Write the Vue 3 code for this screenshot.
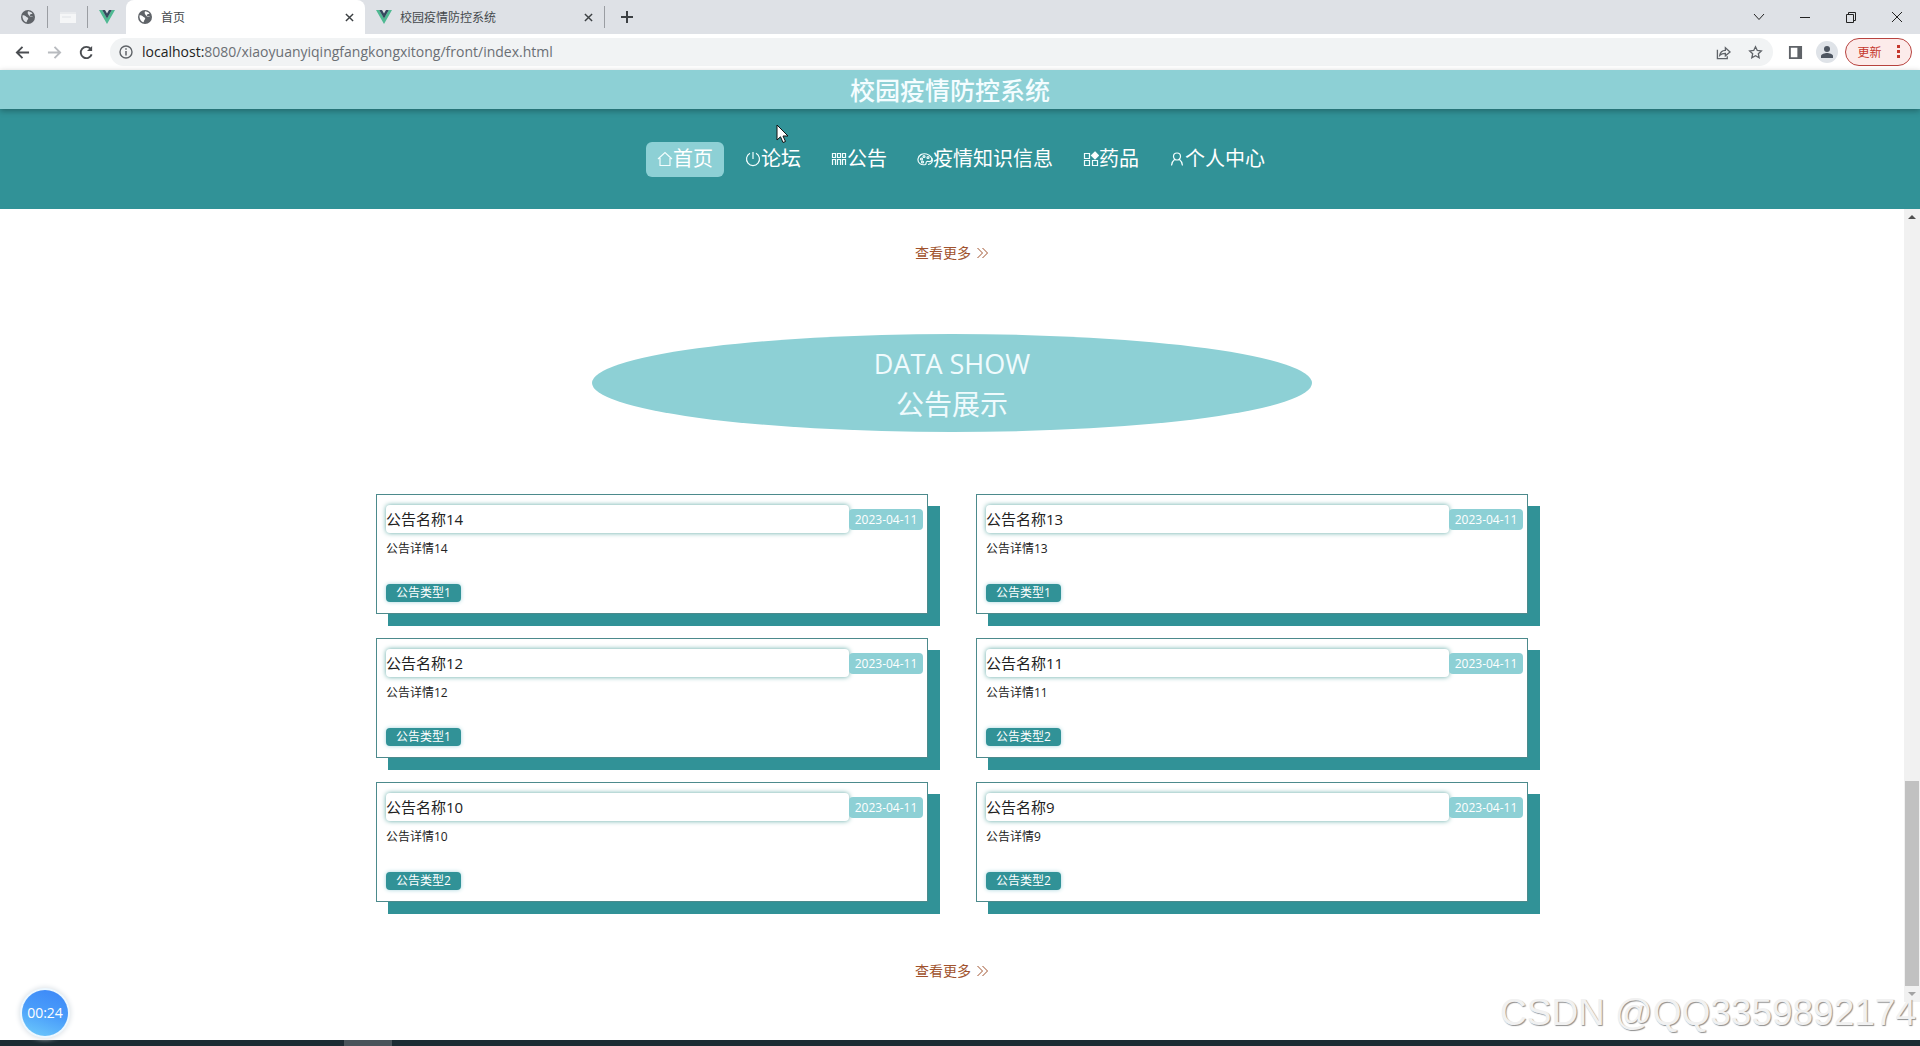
<script setup>
import { ref } from 'vue'

const url = { host: 'localhost:', path: '8080/xiaoyuanyiqingfangkongxitong/front/index.html' }

const menu = [
  { label: '首页', icon: 'home' },
  { label: '论坛', icon: 'power' },
  { label: '公告', icon: 'grid' },
  { label: '疫情知识信息', icon: 'palette' },
  { label: '药品', icon: 'apps' },
  { label: '个人中心', icon: 'user' },
]
const active = ref('首页')

const notices = [
  { id: 14, type: 1 },
  { id: 13, type: 1 },
  { id: 12, type: 1 },
  { id: 11, type: 2 },
  { id: 10, type: 2 },
  { id: 9, type: 2 },
]
const date = '2023-04-11'
</script>

<template>
  <div class="screen">
    <div class="tabs">
      <button class="pinned" aria-label="globe">
        <svg class="i16" viewBox="0 0 16 16"><circle cx="8" cy="8" r="7" fill="#5f6368" /><path d="M2.6 6.2c1.6-.2 2.7.4 3.4 1.4.7.9 1.9.7 2.2 1.7.2 1-.9 1.4-1.1 2.4-.1.7-.5 1.5-1.1 1.6C3.9 12 2 9.5 2.6 6.2zM8 2.2c1.5.1 3.4.8 4.5 2.4-.9.9-1.8.3-2.5 1.1-.7.7.2 1.3 1.1 1.4.9 0 1.4.4 2.3 1.3-.2-1.3-3 .2-4.2-1.7C8.3 5.4 7 4.4 8 2.2z" fill="#dee1e6" /></svg>
      </button>
      <button class="pinned" aria-label="window">
        <svg class="i16" viewBox="0 0 16 16"><rect x="0" y="3" width="16" height="11" fill="#f5f6f7" /><path d="M0 3h16v2H0z" fill="#e8eaed" /><path d="M2 8h9" stroke="#dfe2e6" /></svg>
      </button>
      <button class="pinned last" aria-label="vue">
        <svg class="i16" viewBox="0 0 16 16"><path d="M0 1h3.2L8 9.2 12.8 1H16L8 15z" fill="#4fb992" /><path d="M3.2 1H6l2 3.5L10 1h2.8L8 9.4z" fill="#35495e" /></svg>
      </button>
      <div class="tab current">
        <svg class="i16" viewBox="0 0 16 16"><circle cx="8" cy="8" r="7" fill="#5f6368" /><path d="M2.6 6.2c1.6-.2 2.7.4 3.4 1.4.7.9 1.9.7 2.2 1.7.2 1-.9 1.4-1.1 2.4-.1.7-.5 1.5-1.1 1.6C3.9 12 2 9.5 2.6 6.2zM8 2.2c1.5.1 3.4.8 4.5 2.4-.9.9-1.8.3-2.5 1.1-.7.7.2 1.3 1.1 1.4.9 0 1.4.4 2.3 1.3-.2-1.3-3 .2-4.2-1.7C8.3 5.4 7 4.4 8 2.2z" fill="#fff" /></svg>
        <span class="tab-name">首页</span>
        <button class="close" aria-label="close tab"><svg viewBox="0 0 10 10"><path d="M1 1l8 8M9 1L1 9" stroke="#3c4043" stroke-width="1.6" /></svg></button>
      </div>
      <div class="tab">
        <svg class="i16" viewBox="0 0 16 16"><path d="M0 1h3.2L8 9.2 12.8 1H16L8 15z" fill="#4fb992" /><path d="M3.2 1H6l2 3.5L10 1h2.8L8 9.4z" fill="#35495e" /></svg>
        <span class="tab-name">校园疫情防控系统</span>
        <button class="close" aria-label="close tab"><svg viewBox="0 0 10 10"><path d="M1 1l8 8M9 1L1 9" stroke="#3c4043" stroke-width="1.6" /></svg></button>
      </div>
      <button class="new" aria-label="new tab"><svg viewBox="0 0 12 12"><path d="M6 0v12M0 6h12" stroke="#3c4043" stroke-width="2" /></svg></button>
      <div class="window">
        <button aria-label="tab search"><svg viewBox="0 0 12 12"><path d="M1 3l5 5.500L11 3" /></svg></button>
        <button aria-label="minimize"><svg viewBox="0 0 12 12"><path d="M1 6.500h10" /></svg></button>
        <button aria-label="restore"><svg viewBox="0 0 12 12"><path d="M1.500 3.500h7v8h-7zM3.500 3.500v-2h7v8h-2" /></svg></button>
        <button aria-label="close"><svg viewBox="0 0 12 12"><path d="M1 1l10 10M11 1L1 11" /></svg></button>
      </div>
    </div>

    <div class="toolbar">
      <button class="tool" aria-label="back"><svg viewBox="0 0 16 16" stroke="#4a4d51"><path d="M15 8H2M8 2L2 8l6 6" /></svg></button>
      <button class="tool" aria-label="forward"><svg viewBox="0 0 16 16" stroke="#b8bbbf"><path d="M1 8h13M8 2l6 6-6 6" /></svg></button>
      <button class="tool" aria-label="reload"><svg viewBox="0 0 16 16" stroke="#4a4d51"><path d="M13.500 10A6 6 0 1 1 12.500 4.200" /><path d="M14 1v5.500H8.500z" fill="#4a4d51" stroke="none" /></svg></button>
      <div class="address">
        <svg class="info" viewBox="0 0 14 14"><circle cx="7" cy="7" r="6" fill="none" stroke="#5f6368" stroke-width="1.4" /><path d="M7 6v4.500M7 3.300v1.500" stroke="#5f6368" stroke-width="1.5" /></svg>
        <span class="url"><b>{{ url.host }}</b>{{ url.path }}</span>
        <button class="tool" aria-label="share"><svg viewBox="0 0 16 16" stroke="#5f6368" class="thin"><path d="M1.500 5v9.500H12V12M4 11c.5-3.500 2.500-5 6-5.200V3l5 4.500-5 4V9c-2.500 0-4.500.5-6 2z" /></svg></button>
        <button class="tool" aria-label="bookmark"><svg viewBox="0 0 16 16" stroke="#5f6368" class="thin"><path d="M8 1.800l1.900 4 4.300.5-3.200 3 .9 4.400L8 11.500l-3.900 2.200.9-4.400-3.200-3 4.300-.5z" /></svg></button>
      </div>
      <button class="tool panel" aria-label="side panel"><svg viewBox="0 0 16 16"><path d="M1 1h14v14H1zM3 3v10h7V3z" fill="#5f6368" fill-rule="evenodd" stroke="none" /></svg></button>
      <button class="avatar" aria-label="profile"><svg viewBox="0 0 14 14"><circle cx="7" cy="4" r="3" fill="#4d5560" /><path d="M1 13v-2c0-2 4-3 6-3s6 1 6 3v2z" fill="#4d5560" /></svg></button>
      <button class="update">更新 <svg viewBox="0 0 4 14"><path d="M1 0h3v3H1zM1 5h3v3H1zM1 10h3v3H1z" fill="#c5372c" /></svg></button>
    </div>

    <header>
      <h1>校园疫情防控系统</h1>
      <nav>
        <a v-for="m in menu" :key="m.label" href="#" :class="{ on: m.label === active }" @click.prevent="active = m.label">
          <svg viewBox="0 0 16 16">
            <path v-if="m.icon === 'home'" d="M1 8l7-6.500L15 8M3 7v7.500h10V7" />
            <path v-else-if="m.icon === 'power'" d="M5 2.300a6.500 6.500 0 1 0 6 0M8 1v7" />
            <path v-else-if="m.icon === 'grid'" d="M1.500 2.500h3v4h-3zM6.500 2.500h3v4h-3zM11.500 2.500h3v4h-3zM1.500 14V8.500h3V14M6.500 14V8.500h3V14M11.500 14V8.500h3V14" />
            <g v-else-if="m.icon === 'palette'">
              <path d="M8.500 13.500c-4.500 1-8-1.500-7.500-5.500s4.500-6 8.500-5 6 4.500 5 6.500-3 .5-4.500 1-.5 2.500-1.500 3zM15 7c1 3 0 6-4 6.500" />
              <circle cx="4.500" cy="8" r="1" /><circle cx="7" cy="5.500" r="1" /><circle cx="11" cy="6.500" r="1" /><circle cx="5.500" cy="11" r="1" />
            </g>
            <g v-else-if="m.icon === 'apps'">
              <path d="M1.500 2.500h5v5h-5zM1.500 9.500h5v5h-5zM9.500 9.500h5v5h-5z" /><path d="M12 1l3.500 3.500L12 8 8.500 4.500z" fill="#fff" />
            </g>
            <path v-else d="M8 2a3.500 3.500 0 1 1 0 7 3.500 3.500 0 1 1 0-7M5.500 8.500C3.500 10 2.800 12 2.500 14.500M10.500 8.500C12.500 10 13.200 12 13.500 14.500" />
          </svg>{{ m.label }}
        </a>
      </nav>
      <svg class="cursor" viewBox="0 0 13 20"><path d="M1 1v15l3.500-3.200L7 18.500l2.500-1-2.500-5.500h5z" fill="#fff" stroke="#111" /></svg>
    </header>

    <div class="view">
      <main>
        <a class="more" href="#">查看更多 <svg viewBox="0 0 12 12"><path d="M1 1l5 5-5 5M6 1l5 5-5 5" /></svg></a>
        <h2><span class="en">DATA SHOW</span><span>公告展示</span></h2>
        <section class="cards">
          <article v-for="n in notices" :key="n.id">
            <div class="row">
              <h3>公告名称{{ n.id }}</h3>
              <time>{{ date }}</time>
            </div>
            <p>公告详情{{ n.id }}</p>
            <span class="tag">公告类型{{ n.type }}</span>
          </article>
        </section>
        <a class="more" href="#">查看更多 <svg viewBox="0 0 12 12"><path d="M1 1l5 5-5 5M6 1l5 5-5 5" /></svg></a>
      </main>
      <div class="scrollbar">
        <svg viewBox="0 0 16 16"><path d="M4 10l4-4 4 4z" fill="#505050" /></svg>
        <div class="thumb"></div>
        <svg viewBox="0 0 16 16"><path d="M4 6l4 4 4-4z" fill="#a3a3a3" /></svg>
      </div>
    </div>

    <div class="taskbar"><span></span></div>
    <div class="timer">00:24</div>
    <div class="watermark">CSDN @QQ3359892174</div>
  </div>
</template>

<style>
body {
  margin: 0;
  background: #fff;
}
</style>

<style scoped>
* {
  box-sizing: border-box;
}
.screen {
  position: relative;
  display: flex;
  flex-direction: column;
  min-height: 100vh;
  overflow: hidden;
  font-family: "Open Sans", "Noto Sans CJK SC", sans-serif;
  color: #222;
}
button {
  display: flex;
  align-items: center;
  justify-content: center;
  padding: 0;
  border: 0;
  background: none;
  font: inherit;
}
a {
  text-decoration: none;
}
svg {
  flex: none;
}
.i16 {
  width: 16px;
  height: 16px;
}
.tabs {
  display: flex;
  align-items: center;
  height: 34px;
  padding-left: 8px;
  background: #dee1e6;
}
.pinned {
  width: 40px;
  height: 22px;
  border-right: 1px solid #9a9da2;
}
.pinned.last {
  width: 38px;
  border: 0;
}
.tab {
  display: flex;
  align-items: center;
  gap: 8px;
  width: 239px;
  height: 34px;
  padding: 0 10px 0 11px;
  font-size: 12px;
  color: #45494d;
}
.tab.current {
  background: #fff;
  border-radius: 8px 8px 0 0;
}
.tab-name {
  flex: 1;
}
.close {
  width: 12px;
  height: 16px;
}
.close svg {
  width: 9px;
  height: 9px;
}
.new {
  width: 44px;
  height: 22px;
  border-left: 1px solid #9a9da2;
}
.new svg {
  width: 12px;
  height: 12px;
}
.window {
  display: flex;
  margin-left: auto;
}
.window button {
  width: 46px;
  height: 28px;
}
.window svg {
  width: 12px;
  height: 12px;
  fill: none;
  stroke: #222;
}
.toolbar {
  display: flex;
  align-items: center;
  height: 36px;
  padding: 0 8px 0 6px;
  background: #fff;
}
.tool {
  width: 32px;
  height: 28px;
}
.tool svg {
  width: 15px;
  height: 15px;
  fill: none;
  stroke-width: 2;
}
.tool svg.thin {
  stroke-width: 1.4;
}
.address {
  display: flex;
  flex: 1;
  align-items: center;
  height: 28px;
  margin-left: 8px;
  padding: 0 2px 0 9px;
  border-radius: 14px;
  background: #f1f3f4;
}
.info {
  width: 14px;
  height: 14px;
  margin-right: 9px;
}
.url {
  flex: 1;
  font-size: 14px;
  line-height: 20px;
  color: #6b6f74;
}
.url b {
  font-weight: 400;
  color: #222;
}
.panel {
  margin-left: 6px;
}
.avatar {
  width: 22px;
  height: 22px;
  margin: 0 7px 0 5px;
  border-radius: 50%;
  background: #dfe3e8;
}
.avatar svg {
  width: 14px;
  height: 14px;
}
.update {
  gap: 14px;
  width: 67px;
  height: 28px;
  border: 1px solid #b8433f;
  border-radius: 14px;
  background: #fcebea;
  font-size: 12px;
  color: #c5372c;
}
.update svg {
  width: 4px;
  height: 14px;
}
header {
  position: relative;
  background: #319297;
}
h1 {
  position: relative;
  height: 39px;
  margin: 0;
  padding: 1px 20px 0 0;
  background: #8dd0d5;
  box-shadow: 0 2px 6px rgba(0, 0, 0, 0.3);
  font-size: 25px;
  font-weight: 500;
  line-height: 38px;
  text-align: center;
  color: #f4fdff;
}
nav {
  display: flex;
  align-items: center;
  justify-content: center;
  gap: 12px;
  height: 100px;
}
nav a {
  display: flex;
  align-items: center;
  height: 35px;
  padding: 0 9px;
  border-radius: 6px;
  font-size: 20px;
  line-height: 28px;
  color: #fff;
}
nav a.on {
  padding: 0 11px;
  background: #8dd0d5;
}
nav svg {
  width: 16px;
  height: 16px;
  fill: none;
  stroke: #f2fdfd;
  stroke-width: 1.2;
}
.cursor {
  position: absolute;
  top: 54px;
  left: 776px;
  width: 13px;
  height: 20px;
}
.view {
  display: flex;
  flex: 1;
}
main {
  display: flex;
  flex: 1;
  flex-direction: column;
  align-items: center;
  padding-top: 34px;
}
.more {
  display: flex;
  align-items: center;
  gap: 5px;
  font-size: 14px;
  line-height: 20px;
  color: #a0522d;
}
.more svg {
  width: 13px;
  height: 12px;
  fill: none;
  stroke: #a0522d;
}
h2 {
  display: flex;
  flex-direction: column;
  justify-content: center;
  width: 720px;
  height: 98px;
  margin: 71px 0 62px;
  padding-top: 2px;
  border-radius: 50%;
  background: #8dd0d5;
  font-size: 28px;
  font-weight: 400;
  line-height: 40px;
  text-align: center;
  color: #f0fbfd;
}
.en {
  font-size: 27px;
}
.cards {
  display: grid;
  grid-template-columns: 1fr 1fr;
  gap: 24px 48px;
  width: 1152px;
  margin-bottom: 59px;
}
article {
  height: 120px;
  padding: 10px 4px 10px 9px;
  border: 1px solid #4c8a8c;
  background: #fff;
  box-shadow: 12px 12px 0 #319297;
}
.row {
  display: flex;
  align-items: center;
}
h3 {
  flex: 1;
  margin: 0;
  border-radius: 4px;
  box-shadow: 0 0 5px #5fa8a4;
  font-size: 15px;
  font-weight: 400;
  line-height: 28px;
}
time {
  width: 74px;
  border-radius: 4px;
  background: #8dd0d5;
  font-size: 12px;
  line-height: 21px;
  text-align: center;
  color: #fff;
}
p {
  height: 45px;
  margin: 6px 0 0;
  font-size: 12px;
  line-height: 20px;
}
.tag {
  display: block;
  width: 75px;
  border-radius: 4px;
  background: #319297;
  box-shadow: 0 0 4px #a5d4dc;
  font-size: 12px;
  line-height: 18px;
  text-align: center;
  color: #fff;
}
.scrollbar {
  display: flex;
  flex-direction: column;
  width: 16px;
  margin-bottom: 38px;
  background: #f1f1f1;
}
.scrollbar svg {
  width: 16px;
  height: 16px;
}
.thumb {
  height: 205px;
  margin: auto 1px 0;
  background: #c1c1c1;
}
.taskbar {
  height: 6px;
  padding-left: 344px;
  background: #1c2b33;
}
.taskbar span {
  display: block;
  width: 48px;
  height: 6px;
  background: #4a545b;
}
.timer {
  position: absolute;
  bottom: 10px;
  left: 22px;
  width: 46px;
  height: 46px;
  border-radius: 50%;
  background: linear-gradient(200deg, #3b86f7, #4a9dfa 50%, #6fcdfb);
  box-shadow: 0 0 0 2px #edf8ff, 0 0 5px 3px #dde3e8;
  font-size: 14px;
  line-height: 46px;
  text-align: center;
  color: #fff;
}
.watermark {
  position: absolute;
  right: 4px;
  bottom: 11px;
  font: 37px/44px "Liberation Sans", sans-serif;
  color: #f1f1f1;
  text-shadow: 1px 1px 1px #8f8f8f;
}
</style>
